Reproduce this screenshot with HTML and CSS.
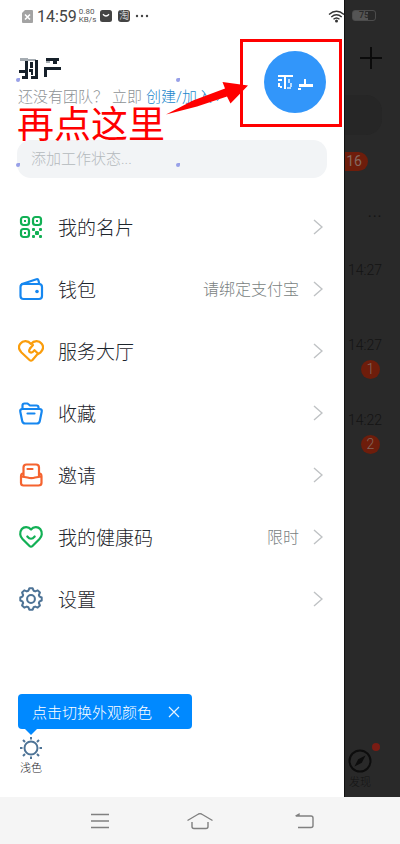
FILE: index.html
```html
<!DOCTYPE html>
<html lang="zh-CN">
<head>
<meta charset="utf-8">
<meta name="viewport" content="width=device-width, initial-scale=1">
<title>我的</title>
<link rel="stylesheet" href="styles.css">
</head>
<body>
<div class="screen">
  <main class="drawer">
    <div class="status">
      <svg width="11" height="13" viewBox="0 0 11 13"><path d="M3 0h7a1 1 0 0 1 1 1v11a1 1 0 0 1-1 1H1a1 1 0 0 1-1-1V3z" fill="#a3a3a3"/><path d="M3 4.500l5 5m0-5l-5 5" stroke="#fff" stroke-width="1.600"/></svg>
      <span class="clock">14:59</span>
      <span class="speed"><span>0.80</span><span>KB/s</span></span>
      <svg class="app" width="12" height="12" viewBox="0 0 12 12"><rect width="12" height="12" rx="2.500" fill="#444"/><path d="M3 4.200q3 3.600 6 0" fill="none" stroke="#fff" stroke-width="1.400"/></svg>
      <span class="tao">淘</span>
      <svg width="14" height="4" viewBox="0 0 14 4"><g fill="#444"><circle cx="2" cy="2" r="1.200"/><circle cx="7" cy="2" r="1.200"/><circle cx="12" cy="2" r="1.200"/></g></svg>
      <svg class="wifi" width="17" height="13" viewBox="0 0 17 13"><g fill="none" stroke="#333" stroke-width="1.400"><path d="M1 4.500q7.500-6.500 15 0"/><path d="M3.300 7q5.200-4.500 10.400 0"/><path d="M5.500 9.300q3-2.600 6 0"/></g><circle cx="8.500" cy="11" r="1.500" fill="#333"/></svg>
    </div>

    <header class="profile">
      <div class="who">
        <svg class="name" width="44" height="22" viewBox="0 0 44 22" aria-hidden="true">
          <g fill="#a5acb2"><rect x="2" y="0" width="8" height="3"/><rect x="10" y="1" width="8" height="2"/><rect x="28" y="3" width="4" height="2"/></g>
          <g fill="#16202a"><rect x="7" y="3" width="3" height="18"/><rect x="1" y="12" width="7" height="3"/><rect x="4" y="18" width="5" height="3"/><rect x="17" y="2" width="3" height="19"/><rect x="12" y="4" width="3" height="6"/><rect x="11" y="11" width="4" height="3"/><rect x="13" y="14" width="2" height="3"/><rect x="13" y="18" width="5" height="3"/><rect x="28" y="0" width="13" height="3"/><rect x="35" y="3" width="4" height="3"/><rect x="26" y="9" width="17" height="3"/><rect x="26" y="11" width="3" height="8"/></g>
        </svg>
        <p class="team"><span>还没有团队？</span><span>立即</span><a href="#team">创建/加入 ›</a></p>
      </div>
      <button class="avatar" aria-label="头像">
        <svg width="38" height="18" viewBox="0 0 38 18"><g fill="#fff"><rect x="2" y="2" width="15" height="2"/><rect x="8" y="4" width="2" height="12"/><rect x="2" y="6" width="4" height="2"/><rect x="2" y="10" width="2" height="4"/><rect x="4" y="13" width="2" height="2"/><rect x="28" y="6" width="2" height="5"/><rect x="23" y="11" width="14" height="3"/><rect x="22" y="15" width="3" height="2"/></g><g fill="#b9dcff"><rect x="12" y="6" width="2" height="4"/><rect x="14" y="10" width="2" height="4"/><rect x="11" y="14" width="4" height="2"/></g></svg>
      </button>
    </header>

    <input class="work" type="text" placeholder="添加工作状态..." aria-label="工作状态">

    <nav class="menu">
      <a href="#card"><svg class="ico" viewBox="0 0 26 26" stroke="#12b055"><rect x="3" y="3" width="8" height="8" rx="2.500"/><rect x="15" y="3" width="8" height="8" rx="2.500"/><rect x="3" y="15" width="8" height="8" rx="2.500"/><g fill="#12b055" stroke="none"><rect x="6" y="6" width="2" height="2"/><rect x="18" y="6" width="2" height="2"/><rect x="6" y="18" width="2" height="2"/><rect x="14" y="14" width="3" height="3" rx="1"/><rect x="21" y="14" width="3" height="3" rx="1"/><rect x="17" y="17" width="4" height="4" rx="1"/><rect x="14" y="21" width="3" height="3" rx="1"/><rect x="21" y="21" width="3" height="3" rx="1"/></g></svg><span class="label">我的名片</span><svg class="chev" viewBox="0 0 10 16"><path d="M1 1l8 7-8 7"/></svg></a>
      <a href="#wallet"><svg class="ico" viewBox="0 0 26 26" stroke="#1687f0"><rect x="2.500" y="8" width="21.500" height="15" rx="3"/><path d="M4 8L18.500 3.200q1.500-.4 1.900 1L21.300 8"/><circle cx="19" cy="15.500" r="1.800" fill="#1687f0" stroke="none"/></svg><span class="label">钱包</span><span class="note">请绑定支付宝</span><svg class="chev" viewBox="0 0 10 16"><path d="M1 1l8 7-8 7"/></svg></a>
      <a href="#service"><svg class="ico" viewBox="0 0 26 26" stroke="#fa9d0c"><path d="M12 10.500q-2 3 .5 4q2 .5 4-2.300l3.500 3.300L14.500 22q-1.500 1.300-3 0L3.500 14.500C1 12 0 8.500 2.500 5.500C5 2.300 10 2.300 13 6C16 2.300 21 2.300 23.500 5.500C26 8.500 25 12 22.500 14.500L20 16"/><path d="M12 10.500L15 7"/></svg><span class="label">服务大厅</span><svg class="chev" viewBox="0 0 10 16"><path d="M1 1l8 7-8 7"/></svg></a>
      <a href="#fav"><svg class="ico" viewBox="0 0 26 26" stroke="#1687f0"><path d="M4.500 9h17q2.800 0 2.200 2.800L21.800 21q-.5 2.500-3 2.500H7.200q-2.500 0-3-2.500L2.300 11.800Q1.700 9 4.500 9z"/><path d="M4.500 9V5.500q0-2 2-2h3l2.500 2h6.500q2 0 2 2V9M9.500 13.500h7"/></svg><span class="label">收藏</span><svg class="chev" viewBox="0 0 10 16"><path d="M1 1l8 7-8 7"/></svg></a>
      <a href="#invite"><svg class="ico" viewBox="0 0 26 26" stroke="#f5632f"><path d="M5.500 14V5.500q0-3 3-3h9.500q3 0 3 3V14M9.500 7h5"/><path d="M5 11.500q-2 0-2 3V21q0 2.500 2.500 2.500h15Q23.500 23.500 23.500 21v-6.500q0-3-2-3M3 14.500l6.500 1q3.800 1.200 7.600 0l6.400-1"/></svg><span class="label">邀请</span><svg class="chev" viewBox="0 0 10 16"><path d="M1 1l8 7-8 7"/></svg></a>
      <a href="#health"><svg class="ico" viewBox="0 0 26 26" stroke="#12b055"><path d="M13 5.500C10.500 2.300 6 2.300 3.800 5C1.200 8.300 2 12.500 4.500 15L11.500 22q1.500 1.500 3 0l7-7c2.500-2.500 3.300-6.700.7-10C20 2.300 15.500 2.300 13 5.500z"/><path d="M9.300 12.500q3.700 4.500 7.400 0"/></svg><span class="label">我的健康码</span><span class="note">限时</span><svg class="chev" viewBox="0 0 10 16"><path d="M1 1l8 7-8 7"/></svg></a>
      <a href="#settings"><svg class="ico" viewBox="-1 0 28 28" stroke="#4d7396"><path d="M11.200 2.500h3.600l1 2.600 1.700.7 2.700-1.100 2.400 2.400-1.100 2.600.7 1.700 2.300 1v3.200l-2.300 1-.7 1.700 1.100 2.600-2.400 2.400-2.700-1.100-1.700.7-1 2.600h-3.600l-1-2.600-1.700-.7-2.700 1.100-2.400-2.400 1.100-2.600-.7-1.700-2.300-1v-3.200l2.300-1 .7-1.700-1.100-2.600 2.400-2.400 2.700 1.100 1.700-.7z"/><circle cx="13" cy="14" r="4.200"/></svg><span class="label">设置</span><svg class="chev" viewBox="0 0 10 16"><path d="M1 1l8 7-8 7"/></svg></a>
    </nav>

    <div class="theme">
      <div class="tip"><span>点击切换外观颜色</span><button aria-label="关闭"><svg width="12" height="12" viewBox="0 0 12 12"><path d="M1 1l10 10M11 1L1 11" stroke="#e4f3ff" stroke-width="1.200"/></svg></button></div>
      <button class="mode"><svg width="24" height="24" viewBox="0 0 24 24"><circle cx="12" cy="12" r="6.500"/><path d="M12 1v2.500M12 20.500V23M1 12h2.500M20.500 12H23M4 4l2 2M18 18l2 2M20 4l-2 2M6 18l-2 2"/></svg><span>浅色</span></button>
    </div>
  </main>

  <aside class="behind">
    <div class="battery"><span>75</span></div>
    <svg class="plus" width="22" height="22" viewBox="0 0 22 22"><path d="M11 0v22M0 11h22" stroke="#0b0b0b" stroke-width="2"/></svg>
    <div class="search"></div>
    <span class="count">16</span>
    <span class="more">···</span>
    <div class="chat"><time>14:27</time></div>
    <div class="chat"><time>14:27</time><span class="dot">1</span></div>
    <div class="chat"><time>14:22</time><span class="dot">2</span></div>
    <div class="find"><svg width="24" height="24" viewBox="0 0 24 24"><circle cx="12" cy="12" r="10.500" fill="none" stroke="#0d0d0d" stroke-width="2"/><path d="M17.500 6.500L13.800 13.800 6.500 17.500 10.200 10.200z" fill="#0d0d0d"/></svg><span>发现</span></div>
  </aside>

  <div class="frame"></div>
  <svg class="arrow" width="84" height="34" viewBox="0 0 84 34"><path d="M1 33.500L28 19.500 60 7.500 57.500 1 83 4.500 65.500 22.500 62 15.500 32 25.500z" fill="#f00"/></svg>
  <strong class="callout">再点这里</strong>
  <div class="specks"><i></i><i></i><i></i><i></i></div>
</div>

<footer class="keys">
  <button aria-label="菜单"><svg width="28" height="20" viewBox="0 0 28 20"><path d="M5 3.500h18M5 10h18M5 16.500h18"/></svg></button>
  <button aria-label="主页"><svg width="28" height="20" viewBox="0 0 28 20"><path d="M1.500 9.500L12.500 3q1.500-.7 3 0l11 6.500M6 11v4.500q0 2 2 2h12q2 0 2-2V11"/></svg></button>
  <button aria-label="返回"><svg width="28" height="20" viewBox="0 0 28 20"><path d="M10 5h15q2 0 2 2v7.500q0 2-2 2H12M9.500 5L13 3.200V5"/></svg></button>
</footer>
</body>
</html>
```
FILE: styles.css
```css
* { box-sizing: border-box; }
body {
  margin: 0;
  min-height: 100vh;
  display: flex;
  flex-direction: column;
  background: #fff;
  color: #1d252c;
  font-family: Roboto, "Noto Sans CJK SC", sans-serif;
  font-weight: 300;
}
button { border: 0; padding: 0; background: none; font: inherit; color: inherit; }
a { color: inherit; text-decoration: none; }
svg { display: block; flex: none; }

.screen {
  position: relative;
  flex: 1;
  display: grid;
  grid-template-columns: 86fr 14fr;
}
.drawer {
  min-width: 0;
  display: flex;
  flex-direction: column;
  padding: 0 18px;
}

.status {
  display: flex;
  align-items: center;
  height: 32px;
  margin: 0 -2px 0 4px;
}
.clock { margin-left: 4px; font: 400 16px Roboto, sans-serif; color: #444; }
.speed {
  display: flex;
  flex-direction: column;
  margin-left: 2px;
  font: 400 8px/8px Roboto, sans-serif;
  color: #555;
}
.app { margin: 0 6px 0 4px; }
.tao {
  width: 12px;
  margin-right: 5px;
  border-radius: 3px;
  background: #444;
  color: #fff;
  font-size: 10px;
  line-height: 12px;
  text-align: center;
}
.wifi { margin-left: auto; margin-right: -17px; }

.profile {
  display: flex;
  justify-content: space-between;
  height: 108px;
  padding-top: 19px;
}
.who { padding-top: 7px; }
.team {
  display: flex;
  gap: 4px;
  margin: 8px 0 0;
  font-size: 15px;
  line-height: 18px;
  color: #8e9295;
  white-space: nowrap;
}
.team a { color: #1a87cc; }
.avatar {
  display: grid;
  place-items: center;
  width: 62px;
  height: 62px;
  border-radius: 50%;
  background: #3296fa;
}

.work {
  height: 38px;
  margin: 0 -1px;
  padding: 0 14px;
  border: 0;
  border-radius: 14px;
  background: #f2f4f6;
  font: inherit;
  font-size: 15px;
}
.work::placeholder { color: #b4b9bd; opacity: 1; }

.menu { margin-top: 18px; }
.menu a { display: flex; align-items: center; height: 62px; }
.ico {
  width: 26px;
  height: 26px;
  fill: none;
  stroke-width: 2.200;
  stroke-linecap: round;
  stroke-linejoin: round;
}
.label { margin: 0 auto 0 14px; font-size: 19px; }
.note { margin-right: 14px; font-size: 16px; color: #7a7f82; }
.chev {
  width: 10px;
  height: 16px;
  margin-right: 3px;
  fill: none;
  stroke: #bfc2c4;
  stroke-width: 1.400;
}
.label, .note { padding-bottom: 2px; }

.theme { margin-top: auto; padding-bottom: 20px; }
.tip {
  position: relative;
  display: flex;
  align-items: center;
  justify-content: space-between;
  width: 174px;
  height: 35px;
  padding: 0 12px 0 14px;
  border-radius: 4px;
  background: #0089ff;
  color: #fff;
  font-size: 15px;
}
.tip::after {
  content: "";
  position: absolute;
  top: 100%;
  left: 7px;
  border: 6px solid transparent;
  border-top-color: #0089ff;
  border-bottom: 0;
}
.mode {
  display: flex;
  flex-direction: column;
  align-items: center;
  margin-top: 7px;
  padding: 0 1px;
  font-size: 11px;
  line-height: 17px;
}
.mode svg { fill: none; stroke: #4d7396; stroke-width: 2; }

.behind {
  min-width: 0;
  display: flex;
  flex-direction: column;
  align-items: flex-end;
  padding-right: 18px;
  border-left: 1px solid #111;
  background: #292929;
  color: #141414;
  overflow: hidden;
}
.battery {
  width: 24px;
  height: 11px;
  margin: 10px 6px 0 0;
  border: 1px solid #4c4c4c;
  border-radius: 3px;
  background: linear-gradient(90deg, #555 70%, #292929 70%);
  color: #292929;
  font: 500 9px/9px Roboto, sans-serif;
  text-align: center;
}
.plus { margin-top: 26px; }
.search {
  width: 60px;
  height: 40px;
  margin-top: 26px;
  border-radius: 16px;
  background: #262626;
}
.count {
  width: 40px;
  height: 19px;
  margin: 17px 14px 0 0;
  padding-right: 6px;
  border-radius: 10px;
  background: #6e1d0b;
  color: #85695f;
  font: 400 14px/19px Roboto, sans-serif;
  text-align: right;
}
.more { height: 20px; margin: 35px 0 36px; font-size: 20px; line-height: 20px; }
.chat { height: 75px; font-size: 14px; line-height: 16px; }
.chat time { display: block; }
.dot {
  display: block;
  width: 19px;
  height: 19px;
  margin: 7px 2px 0 auto;
  border-radius: 50%;
  background: #6e1d0b;
  color: #85695f;
  line-height: 19px;
  text-align: center;
}
.find {
  position: relative;
  display: flex;
  flex-direction: column;
  align-items: center;
  margin: auto 10px 4px 0;
  font-size: 11px;
  line-height: 20px;
}
.find::after {
  content: "";
  position: absolute;
  top: -6px;
  right: -8px;
  width: 8px;
  height: 8px;
  border-radius: 50%;
  background: #7a1c14;
}

/* Tutorial marks drawn over the screen */
.frame {
  position: absolute;
  top: 39px;
  left: 240px;
  width: 102px;
  height: 88px;
  border: 3px solid #f00;
}
.arrow { position: absolute; top: 81px; left: 165px; }
.callout {
  position: absolute;
  top: 109px;
  left: 17px;
  color: #f00;
  font-size: 37px;
  font-weight: 400;
  line-height: 34px;
}
.specks {
  position: absolute;
  top: 78px;
  left: 16px;
  width: 164px;
  display: grid;
  grid-template-columns: auto auto;
  justify-content: space-between;
  gap: 81px 0;
}
.specks i { width: 4px; height: 4px; border-radius: 2px 0 2px 2px; background: #98a0e8; }

.keys {
  display: flex;
  justify-content: center;
  gap: 72px;
  height: 47px;
  background: #f5f5f5;
}
.keys svg { fill: none; stroke: #808080; stroke-width: 1.400; }
```
